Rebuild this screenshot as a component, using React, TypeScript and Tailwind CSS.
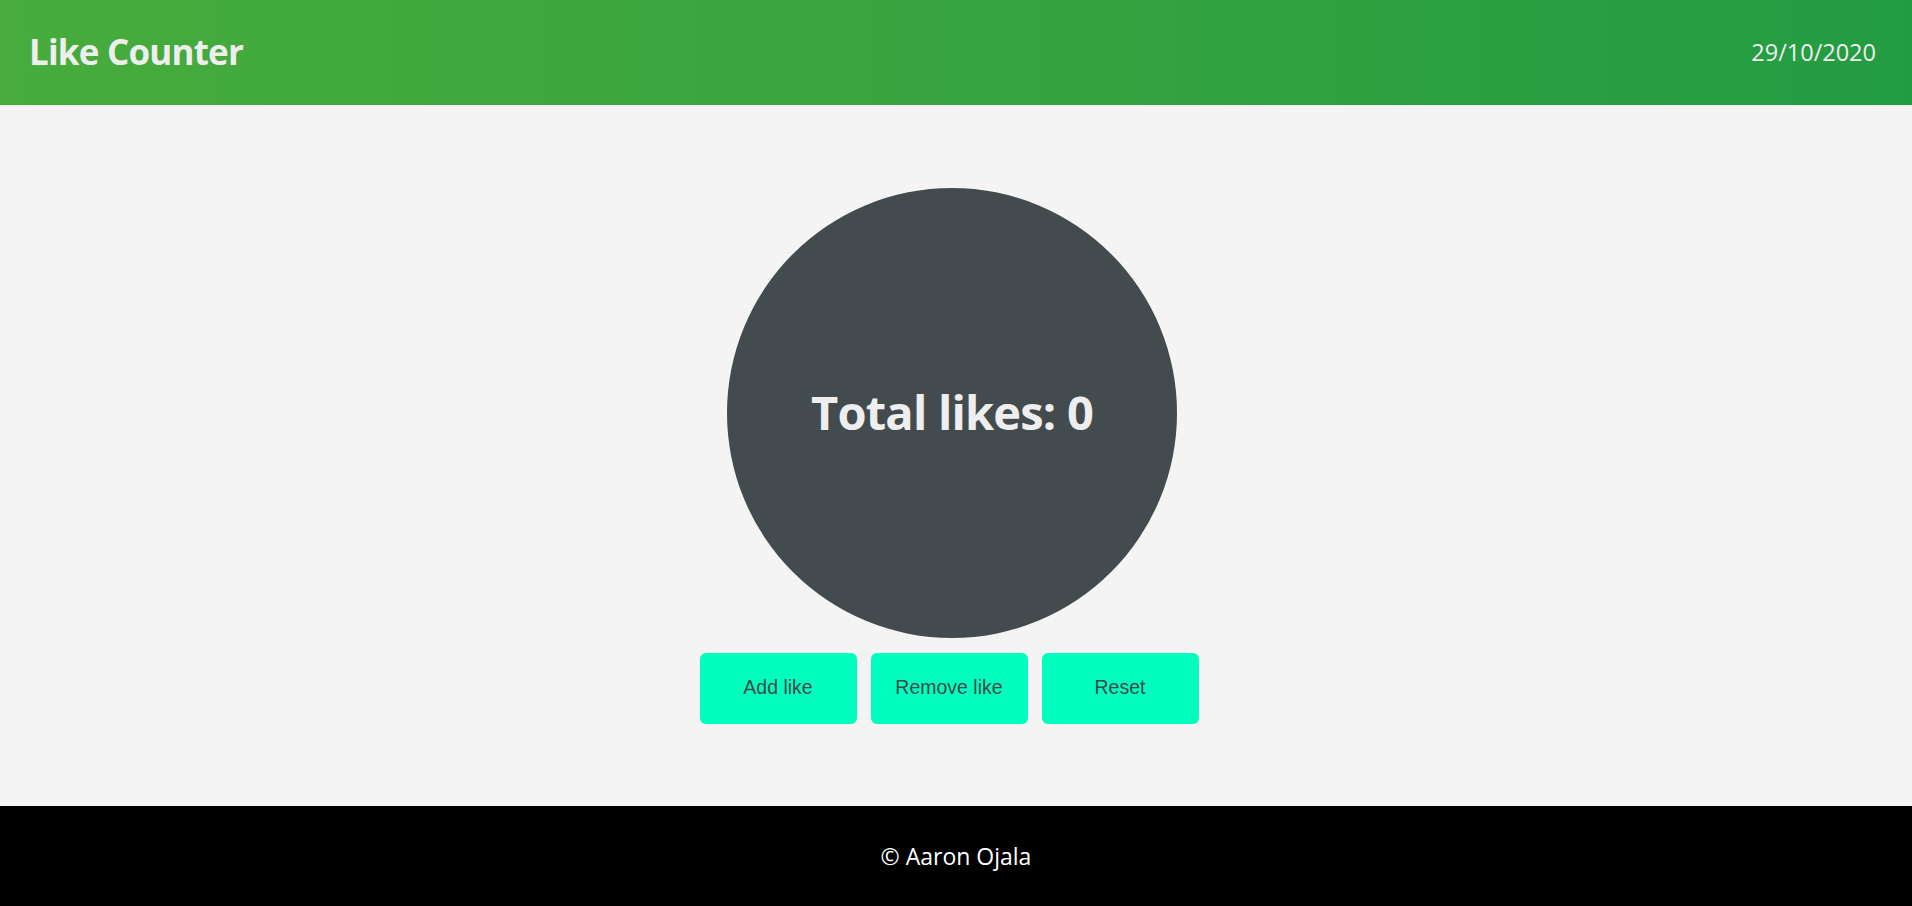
import React, { useState } from "react";

const App = () => {
  const [likes, setLikes] = useState(0);

  return (
    <div className="flex h-screen flex-col bg-[#f4f4f4] font-['Open_Sans',sans-serif]">
      <header className="flex h-[105px] shrink-0 items-center justify-between bg-gradient-to-r from-[#47ac3c] to-[#229c42] pl-[29px] pr-[36px] text-[#eeeeee]">
        <h1 className="text-[35px] font-bold tracking-[-0.8px]">Like Counter</h1>
        <span className="text-[23.5px]">29/10/2020</span>
      </header>

      <main className="flex flex-1 flex-col items-center justify-center gap-[15px]">
        <div className="mr-[8px] flex h-[450px] w-[450px] items-center justify-center rounded-full bg-[#434b4e]">
          <h2 className="text-[47px] font-bold text-[#eeeeee] tracking-[-0.8px]">
            Total likes: {likes}
          </h2>
        </div>
        <div className="flex font-['Liberation_Sans',sans-serif]">
          <button
            onClick={() => setLikes(likes + 1)}
            className="mr-[14px] h-[71px] w-[157px] rounded-[6px] bg-[#00ffbf] text-[19.5px] text-[#3f4a4b]"
          >
            Add like
          </button>
          <button
            onClick={() => setLikes(likes - 1)}
            className="mr-[14px] h-[71px] w-[157px] rounded-[6px] bg-[#00ffbf] text-[19.5px] text-[#3f4a4b]"
          >
            Remove like
          </button>
          <button
            onClick={() => setLikes(0)}
            className="mr-[14px] h-[71px] w-[157px] rounded-[6px] bg-[#00ffbf] text-[19.5px] text-[#3f4a4b]"
          >
            Reset
          </button>
        </div>
      </main>

      <footer className="flex h-[100px] shrink-0 items-center justify-center bg-black text-[23px] text-white">
        © Aaron Ojala
      </footer>
    </div>
  );
};

export default App;
